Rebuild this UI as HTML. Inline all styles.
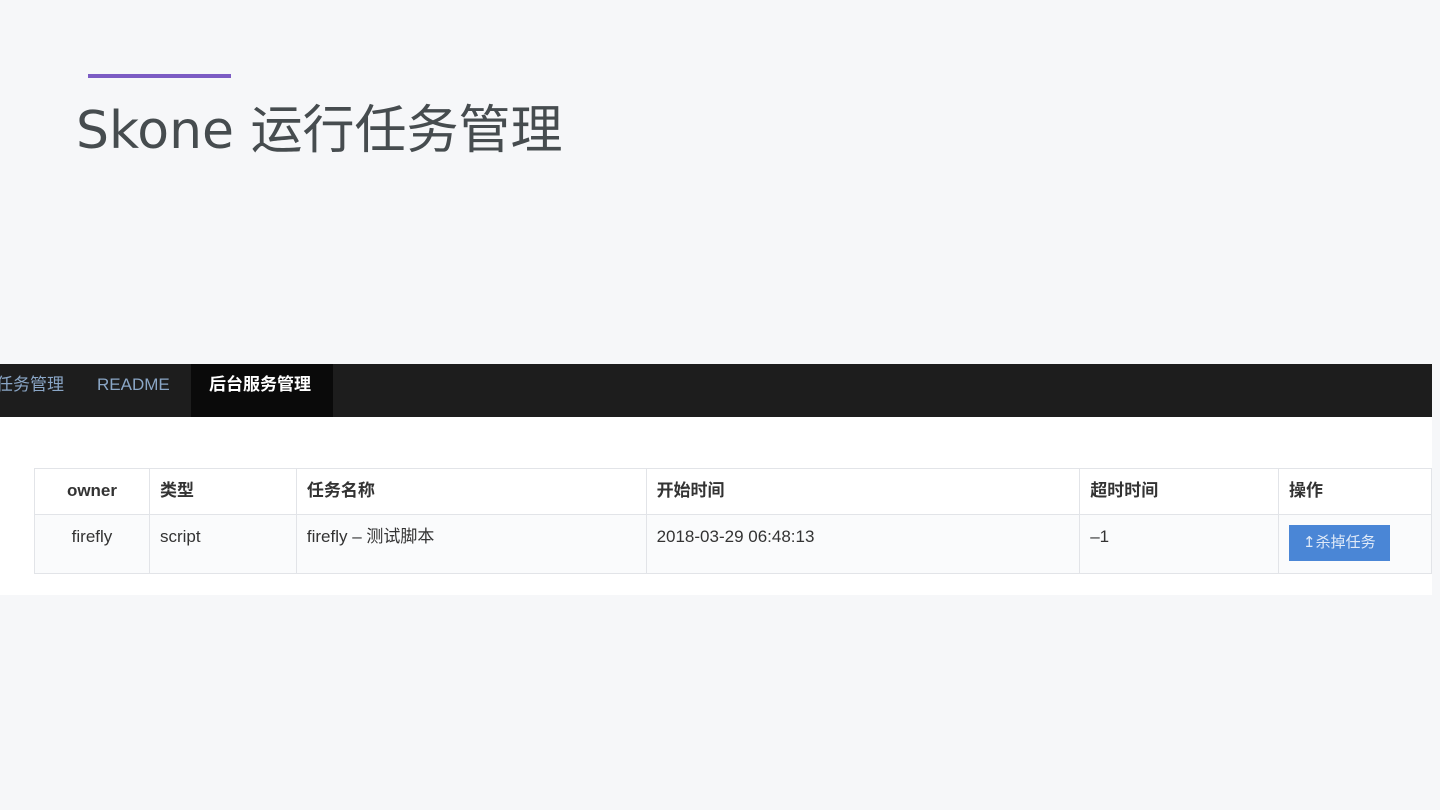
<!DOCTYPE html>
<html><head><meta charset="utf-8"><style>
body{margin:0;width:1440px;height:810px;background:#f6f7f9;position:relative;overflow:hidden;font-family:"Liberation Sans","Noto Sans CJK SC",sans-serif}
.bar{position:absolute;left:88px;top:74px;width:143px;height:4px;background:#7c5cc4}
.title{position:absolute;left:76px;top:96px;font-family:"DejaVu Sans","Noto Sans CJK SC",sans-serif;font-size:52px;color:#464c4f;line-height:70px;white-space:nowrap}
.shot{position:absolute;left:0;top:364px;width:1432px;height:231px;background:#fff}
.nav{position:absolute;left:0;top:0;width:1432px;height:53px;background:#1d1d1d}
.nav span{position:absolute;top:0;line-height:42px;font-size:17px;color:#8aa6c6}
.act{position:absolute;left:191px;top:0;width:142px;height:53px;background:#0a0a0a}
table{position:absolute;left:34px;top:104px;border-collapse:collapse;font-size:17px;color:#333}
td{border:1px solid #e2e4e8;padding:0 10px;vertical-align:top}
tr.h td{height:45px;line-height:44px;font-weight:bold}
tr.b td{height:58px;line-height:44px;background:#fafbfc}
.btn{display:inline-block;background:#4a86d6;color:#e0eaf8;font-size:15px;line-height:36px;padding:0 14px;margin-top:10px}
</style></head><body>
<div class="bar"></div>
<div class="title">Skone 运行任务管理</div>
<div class="shot">
<div class="nav">
<span style="left:-4px">任务管理</span>
<span style="left:97px">README</span>
<div class="act"></div>
<span style="left:209px;color:#fff;font-weight:bold">后台服务管理</span>
</div>
<table>
<tr class="h"><td style="width:94px;text-align:center">owner</td><td style="width:126px">类型</td><td style="width:329px">任务名称</td><td style="width:413px">开始时间</td><td style="width:178px">超时时间</td><td style="width:132px">操作</td></tr>
<tr class="b"><td style="text-align:center">firefly</td><td>script</td><td>firefly – 测试脚本</td><td>2018-03-29 06:48:13</td><td>–1</td><td><span class="btn">↥杀掉任务</span></td></tr>
</table>
</div>
</body></html>
